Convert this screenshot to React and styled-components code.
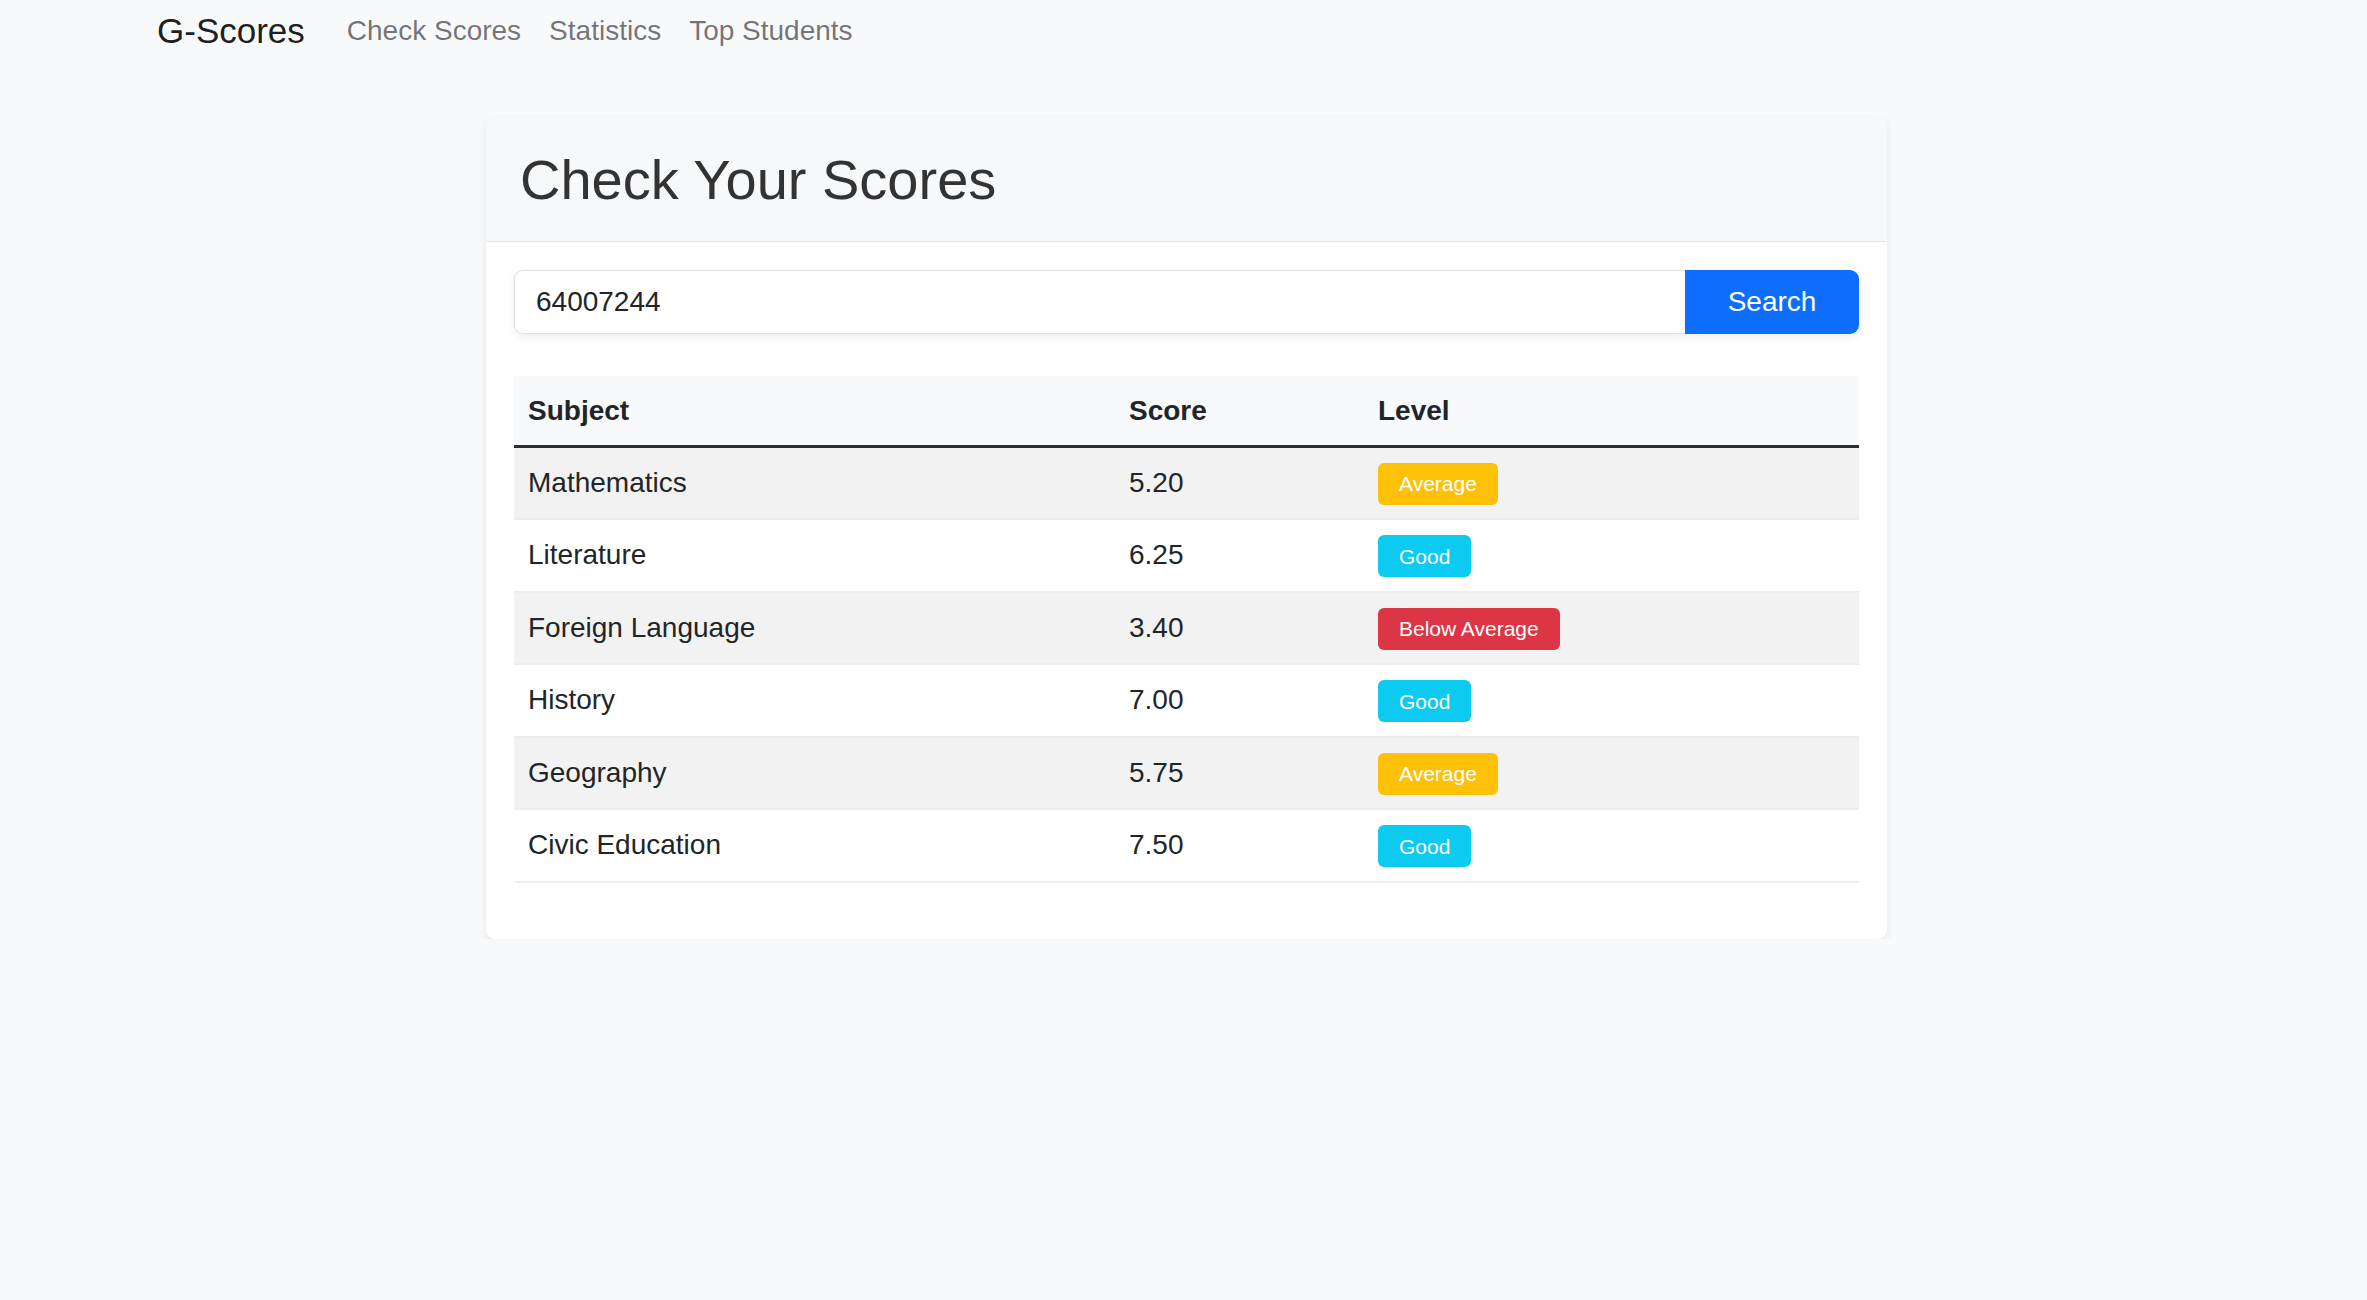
import styled, { createGlobalStyle } from "styled-components"

const scores = [
  { subject: "Mathematics", score: 5.2 },
  { subject: "Literature", score: 6.25 },
  { subject: "Foreign Language", score: 3.4 },
  { subject: "History", score: 7.0 },
  { subject: "Geography", score: 5.75 },
  { subject: "Civic Education", score: 7.5 },
]

const levelOf = (score) => {
  if (score >= 8) return { label: "Excellent", color: "#198754" }
  if (score >= 6) return { label: "Good", color: "#0dcaf0" }
  if (score >= 4) return { label: "Average", color: "#ffc107" }
  return { label: "Below Average", color: "#dc3545" }
}

export default function App() {
  return (
    <>
      <GlobalStyle />
      <Navbar>
        <NavInner>
          <Brand href="#">G-Scores</Brand>
          <NavLink href="#">Check Scores</NavLink>
          <NavLink href="#">Statistics</NavLink>
          <NavLink href="#">Top Students</NavLink>
        </NavInner>
      </Navbar>

      <Main>
        <Card>
          <CardHeader>
            <Title>Check Your Scores</Title>
          </CardHeader>
          <CardBody>
            <InputGroup>
              <Input defaultValue="64007244" />
              <SearchButton>Search</SearchButton>
            </InputGroup>

            <Table>
              <thead>
                <tr>
                  <Th width={601}>Subject</Th>
                  <Th width={249}>Score</Th>
                  <Th>Level</Th>
                </tr>
              </thead>
              <tbody>
                {scores.map((row, i) => {
                  const level = levelOf(row.score)
                  return (
                    <Row key={row.subject} striped={i % 2 === 0}>
                      <Td>{row.subject}</Td>
                      <Td>{row.score.toFixed(2)}</Td>
                      <Td>
                        <Badge color={level.color}>{level.label}</Badge>
                      </Td>
                    </Row>
                  )
                })}
              </tbody>
            </Table>
          </CardBody>
        </Card>
      </Main>
    </>
  )
}

const GlobalStyle = createGlobalStyle`
  html, body {
    margin: 0;
    background: #f8f9fa;
    font-family: "Liberation Sans", Arial, sans-serif;
    color: #212529;
  }
  * {
    box-sizing: border-box;
  }
`

const Navbar = styled.nav`
  height: 60px;
  padding-top: 2px;
`

const NavInner = styled.div`
  max-width: 2053px;
  height: 100%;
  margin: 0 auto;
  display: flex;
  align-items: center;
`

const Brand = styled.a`
  font-size: 35px;
  line-height: 1.5;
  padding: 5px 0;
  margin-right: 28px;
  color: rgba(0, 0, 0, 0.9);
  text-decoration: none;
`

const NavLink = styled.a`
  font-size: 28px;
  line-height: 1.5;
  padding: 8px 14px;
  color: rgba(0, 0, 0, 0.55);
  text-decoration: none;
`

const Main = styled.main`
  padding: 58px 0 0 6px;
`

const Card = styled.div`
  max-width: 1401px;
  margin: 0 auto;
  background: #fff;
  border-radius: 9px;
  box-shadow: 0 3px 8px rgba(0, 0, 0, 0.075);
  overflow: hidden;
`

const CardHeader = styled.div`
  padding: 28px 28px 28px 34px;
  background: #f7f8fa;
  border-bottom: 1.5px solid rgba(0, 0, 0, 0.07);
`

const Title = styled.h2`
  margin: 0;
  font-size: 56px;
  font-weight: 400;
  line-height: 1.2;
  color: #333;
`

const CardBody = styled.div`
  padding: 28px;
`

const InputGroup = styled.div`
  display: flex;
  height: 64px;
  border-radius: 9px;
  box-shadow: 0 3px 8px rgba(0, 0, 0, 0.075);
`

const Input = styled.input`
  flex: 1;
  min-width: 0;
  padding: 0 21px;
  font-family: inherit;
  font-size: 28px;
  color: #212529;
  background: #fff;
  border: 1.5px solid #dee2e6;
  border-right: none;
  border-radius: 9px 0 0 9px;
  outline: none;
`

const SearchButton = styled.button`
  width: 174px;
  font-family: inherit;
  font-size: 28px;
  color: #fff;
  background: #0d6efd;
  border: none;
  border-radius: 0 9px 9px 0;
  cursor: pointer;
`

const Table = styled.table`
  width: 100%;
  margin: 42px 0 28px;
  border-collapse: collapse;
  font-size: 28px;
  line-height: 42px;
`

const Th = styled.th`
  width: ${(p) => (p.width ? `${p.width}px` : "auto")};
  padding: 13.5px 14px;
  text-align: left;
  font-weight: 700;
  background: #f8f9fa;
  border-bottom: 3.5px solid #2b2e31;
`

const Row = styled.tr`
  background: ${(p) => (p.striped ? "#f2f2f2" : "#fff")};
  border-bottom: 2px solid #ededed;
`

const Td = styled.td`
  height: 72.5px;
  padding: 0 14px;
  vertical-align: middle;
`

const Badge = styled.span`
  display: inline-block;
  vertical-align: middle;
  padding: 10.5px 21px;
  font-size: 21px;
  line-height: 1;
  color: #fff;
  background: ${(p) => p.color};
  border-radius: 6px;
`
